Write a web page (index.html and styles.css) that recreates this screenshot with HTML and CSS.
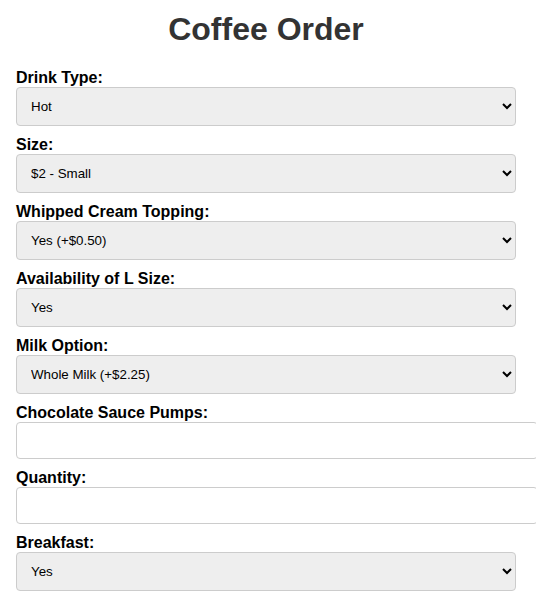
FILE: index.html
```html
<!DOCTYPE html>
<html>
<head>
<meta charset="utf-8">
<link rel="stylesheet" href="styles.css">
</head>
<body>
<div class="container">
  <h1 class="title">Coffee Order</h1>
  <form class="order-form">
    <label class="field-label" for="drink">Drink Type:</label>
    <select class="field" id="drink"><option>Hot</option><option>Cold</option></select>

    <label class="field-label" for="size">Size:</label>
    <select class="field" id="size"><option>$2 - Small</option><option>$3 - Medium</option><option>$4 - Large</option></select>

    <label class="field-label" for="cream">Whipped Cream Topping:</label>
    <select class="field" id="cream"><option>Yes (+$0.50)</option><option>No</option></select>

    <label class="field-label" for="lsize">Availability of L Size:</label>
    <select class="field" id="lsize"><option>Yes</option><option>No</option></select>

    <label class="field-label" for="milk">Milk Option:</label>
    <select class="field" id="milk"><option>Whole Milk (+$2.25)</option><option>No Milk</option></select>

    <label class="field-label" for="pumps">Chocolate Sauce Pumps:</label>
    <input class="field text-field" type="number" id="pumps">

    <label class="field-label" for="qty">Quantity:</label>
    <input class="field text-field" type="number" id="qty">

    <label class="field-label" for="breakfast">Breakfast:</label>
    <select class="field" id="breakfast"><option>Yes</option><option>No</option></select>
  </form>
</div>
</body>
</html>
```
FILE: styles.css
```css
html, body {
  margin: 0;
  padding: 0;
  background: #ffffff;
}
body {
  font-family: "Liberation Sans", Arial, sans-serif;
  overflow: hidden;
}
.container {
  width: 500px;
  padding: 11px 0 0 16px;
}
.title {
  margin: 0 0 21px;
  font-size: 32px;
  font-weight: bold;
  color: #333333;
  text-align: center;
}
.order-form {
  display: block;
}
.field-label {
  display: block;
  font-size: 16px;
  font-weight: bold;
  color: #000000;
}
.field {
  display: block;
  width: 100%;
  padding: 10px;
  margin: 0 0 10px;
  border: 1px solid #cccccc;
  border-radius: 4px;
  font-family: "Liberation Sans", Arial, sans-serif;
  font-size: 13.33px;
  color: #000000;
  background-color: #eeeeee;
}
.text-field {
  background-color: #ffffff;
  box-sizing: content-box;
}
```
